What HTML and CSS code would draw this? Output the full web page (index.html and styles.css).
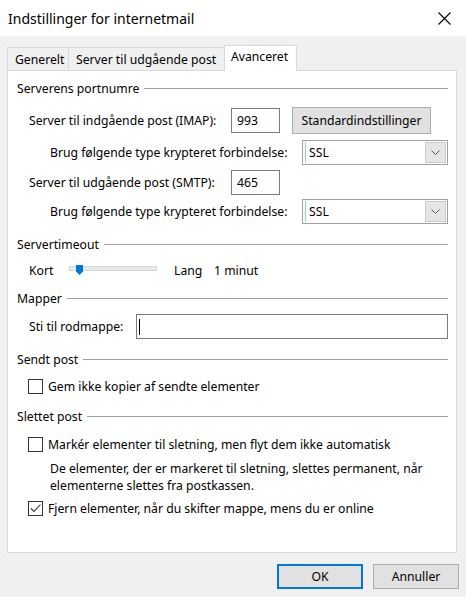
FILE: index.html
```html
<!DOCTYPE html>
<html lang="da">
<head>
<meta charset="utf-8">
<title>Indstillinger for internetmail</title>
<link rel="stylesheet" href="styles.css">
</head>
<body>
<div class="window">
  <div class="titlebar">
    <span class="title">Indstillinger for internetmail</span>
    <svg class="close" width="13" height="13" viewBox="0 0 13 13"><path d="M0.5 0.5 L12.5 12.5 M12.5 0.5 L0.5 12.5" stroke="#000" stroke-width="1.1" fill="none"/></svg>
  </div>
  <div class="content">
    <div class="tabs">
      <div class="tab t1">Generelt</div>
      <div class="tab t2">Server til udgående post</div>
      <div class="tab t3 active">Avanceret</div>
    </div>
    <div class="panel">
      <div class="group-title g1">Serverens portnumre</div>
      <div class="row r-imap">
        <span class="lbl-port">Server til indgående post (IMAP):</span>
        <span class="input port">993</span>
        <span class="btn std">Standardindstillinger</span>
      </div>
      <div class="row r-brug1">
        <span class="lbl-enc">Brug følgende type krypteret forbindelse:</span>
        <span class="select"><span class="sel-text">SSL</span><span class="sel-btn"><svg width="9" height="5" viewBox="0 0 9 5"><path d="M0.5 0.5 L4.5 4.5 L8.5 0.5" stroke="#555" stroke-width="1" fill="none"/></svg></span></span>
      </div>
      <div class="row r-smtp">
        <span class="lbl-port">Server til udgående post (SMTP):</span>
        <span class="input port">465</span>
      </div>
      <div class="row r-brug2">
        <span class="lbl-enc">Brug følgende type krypteret forbindelse:</span>
        <span class="select"><span class="sel-text">SSL</span><span class="sel-btn"><svg width="9" height="5" viewBox="0 0 9 5"><path d="M0.5 0.5 L4.5 4.5 L8.5 0.5" stroke="#555" stroke-width="1" fill="none"/></svg></span></span>
      </div>

      <div class="group-title g2">Servertimeout</div>
      <div class="row r-slider">
        <span class="lbl-kort">Kort</span>
        <span class="track"><svg class="thumb" width="7" height="10" viewBox="0 0 7 10"><path d="M0 0 H7 V6.5 L3.5 10 L0 6.5 Z" fill="#0078d7"/></svg></span>
        <span class="lbl-lang">Lang</span>
        <span>1 minut</span>
      </div>

      <div class="group-title g3">Mapper</div>
      <div class="row r-sti">
        <span class="lbl-sti">Sti til rodmappe:</span>
        <span class="input wide"><span class="caret"></span></span>
      </div>

      <div class="group-title g4">Sendt post</div>
      <div class="row r-cb1">
        <span class="cb"></span>
        <span>Gem ikke kopier af sendte elementer</span>
      </div>

      <div class="group-title g5">Slettet post</div>
      <div class="row r-cb2">
        <span class="cb"></span>
        <span>Markér elementer til sletning, men flyt dem ikke automatisk</span>
      </div>
      <div class="desc">De elementer, der er markeret til sletning, slettes permanent, når<br>elementerne slettes fra postkassen.</div>
      <div class="row r-cb3">
        <span class="cb"><svg width="13" height="13" viewBox="0 0 13 13"><path d="M2 6.5 L5 9.5 L11.5 2.5" stroke="#333" stroke-width="1.1" fill="none"/></svg></span>
        <span>Fjern elementer, når du skifter mappe, mens du er online</span>
      </div>
    </div>
    <div class="buttons">
      <span class="btn dlg ok">OK</span>
      <span class="btn dlg">Annuller</span>
    </div>
  </div>
</div>
</body>
</html>
```
FILE: styles.css
```css
* { box-sizing: border-box; }
html, body { margin: 0; padding: 0; }
body {
  background: #f0f0f0;
  font-family: "Noto Sans", "Open Sans", sans-serif;
  font-size: 12.2px;
  color: #000;
}
.window {
  width: 466px;
  height: 597px;
  display: flex;
  flex-direction: column;
}
.titlebar {
  height: 36px;
  flex: 0 0 36px;
  background: #fff;
  display: flex;
  align-items: center;
  justify-content: space-between;
  padding: 0 15px 0 8px;
}
.title { font-size: 14px; margin-top: 1px; }
.close { display: block; margin-top: 1px; }
.content {
  display: flex;
  flex-direction: column;
  padding: 9px 0 0 7px;
}
.tabs {
  display: flex;
  align-items: flex-end;
  height: 26px;
  margin-bottom: -1px;
}
.tab {
  height: 24px;
  border: 1px solid #d9d9d9;
  border-right: none;
  border-bottom: none;
  background: #f0f0f0;
  display: flex;
  align-items: center;
  padding: 0 0 1px 7px;
  white-space: nowrap;
}
.t1 { width: 61px; }
.t2 { width: 156px; }
.tab.active {
  width: 73px;
  height: 26px;
  background: #fff;
  border-right: 1px solid #d9d9d9;
  position: relative;
  z-index: 1;
  padding: 0 0 4px 6px;
}
.panel {
  width: 450px;
  height: 483px;
  background: #fff;
  border: 1px solid #d9d9d9;
  padding: 0 8px 0 9px;
  display: flex;
  flex-direction: column;
}
.group-title {
  height: 20px;
  display: flex;
  align-items: center;
}
.group-title::after {
  content: "";
  flex: 1;
  height: 1px;
  background: #a0a0a0;
  margin-left: 5px;
}
.g1 { margin-top: 7px; }
.g2 { margin-top: 10px; }
.g3 { margin-top: 8px; }
.g4 { margin-top: 10px; }
.g5 { margin-top: 10px; }
.row {
  display: flex;
  align-items: center;
  white-space: nowrap;
}
.r-imap { height: 27px; margin-top: 9px; }
.r-brug1 { height: 25px; margin-top: 6px; }
.r-smtp { height: 25px; margin-top: 5px; }
.r-brug2 { height: 25px; margin-top: 4px; }
.r-slider { height: 20px; margin-top: 6px; }
.r-sti { height: 25px; margin-top: 6px; }
.r-cb1 { height: 20px; margin-top: 7px; }
.r-cb2 { height: 20px; margin-top: 8px; }
.r-cb3 { height: 20px; margin-top: 4px; }
.lbl-port { margin-left: 12px; width: 202px; flex: 0 0 202px; }
.lbl-enc { margin-left: 33px; width: 252px; flex: 0 0 252px; }
.input {
  height: 25px;
  border: 1px solid #7a7a7a;
  background: #fff;
  display: flex;
  align-items: center;
  padding-left: 5px;
}
.port { width: 49px; }
.btn {
  background: #e1e1e1;
  border: 1px solid #adadad;
  display: flex;
  align-items: center;
  justify-content: center;
}
.std {
  margin-left: 12px;
  width: 139px;
  height: 27px;
}
.select {
  width: 146px;
  height: 25px;
  border: 1px solid #a0a0a0;
  background: #fff;
  display: flex;
  align-items: center;
  padding: 1px 1px 1px 2px;
}
.sel-text {
  flex: 1;
  height: 100%;
  display: flex;
  align-items: center;
  padding-left: 3px;
  border-left: 1px solid #99c9ef;
}
.sel-btn {
  width: 21px;
  height: 21px;
  background: #e5e5e5;
  border: 1px solid #cccccc;
  display: flex;
  align-items: center;
  justify-content: center;
}
.lbl-kort { margin-left: 12px; width: 40px; flex: 0 0 40px; }
.track {
  width: 88px;
  height: 5px;
  background: #e7eaea;
  border: 1px solid #d6d6d6;
  display: flex;
  align-items: center;
  padding-left: 6px;
  margin-top: -3px;
}
.thumb { display: block; margin-top: 2px; }
.lbl-lang { margin-left: 17px; width: 40px; flex: 0 0 40px; }
.lbl-sti { margin-left: 12px; width: 107px; flex: 0 0 107px; }
.wide { flex: 1; padding-left: 2px; }
.caret { width: 1px; height: 16px; background: #000; }
.cb {
  width: 15px;
  height: 15px;
  border: 1px solid #333;
  background: #fff;
  margin-left: 11px;
  margin-right: 5px;
  display: flex;
  align-items: center;
  justify-content: center;
}
.cb svg { display: block; }
.desc {
  margin-top: 6px;
  margin-left: 33px;
  line-height: 17px;
}
.buttons {
  display: flex;
  justify-content: flex-end;
  gap: 10px;
  margin-top: 11px;
  padding-right: 7px;
}
.dlg {
  width: 86px;
  height: 25px;
}
.ok {
  border: 2px solid #0078d7;
}
```
